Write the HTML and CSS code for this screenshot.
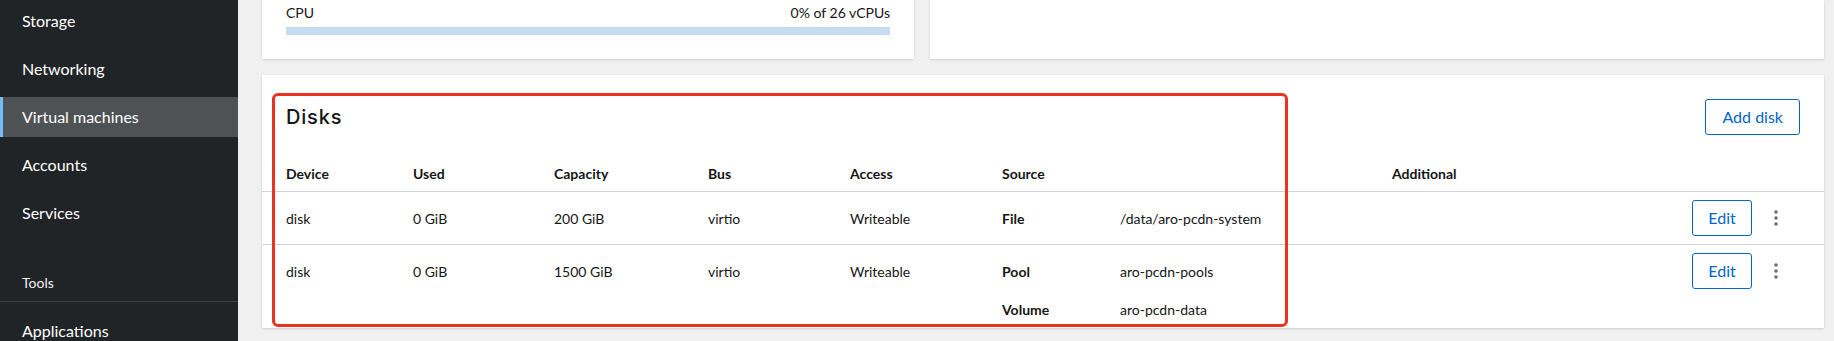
FILE: index.html
```html
<!DOCTYPE html>
<html lang="en">
<head>
<meta charset="utf-8">
<title>Virtual machines</title>
<link rel="stylesheet" href="styles.css">
</head>
<body>
<div class="app">
  <nav class="sidebar">
    <ul class="nav-list">
      <li class="nav-item">Storage</li>
      <li class="nav-item">Networking</li>
      <li class="nav-item active">Virtual machines</li>
      <li class="nav-item">Accounts</li>
      <li class="nav-item">Services</li>
    </ul>
    <div class="nav-section">Tools</div>
    <ul class="nav-list tools">
      <li class="nav-item">Applications</li>
    </ul>
  </nav>
  <main class="main">
    <div class="top-grid">
      <section class="card usage-card">
        <div class="usage-row">
          <span>CPU</span>
          <span>0% of 26 vCPUs</span>
        </div>
        <div class="progress"><div class="progress-fill" style="width:0%"></div></div>
      </section>
      <section class="card"></section>
    </div>
    <section class="card disks-card">
      <header class="card-header">
        <h2 class="card-title">Disks</h2>
        <button class="btn btn-secondary">Add disk</button>
      </header>
      <div class="table">
        <div class="row head">
          <div>Device</div>
          <div>Used</div>
          <div>Capacity</div>
          <div>Bus</div>
          <div>Access</div>
          <div>Source</div>
          <div>Additional</div>
          <div></div>
        </div>
        <div class="row">
          <div>disk</div>
          <div>0 GiB</div>
          <div>200 GiB</div>
          <div>virtio</div>
          <div>Writeable</div>
          <dl class="source">
            <dt>File</dt><dd>/data/aro-pcdn-system</dd>
          </dl>
          <div></div>
          <div class="actions">
            <button class="btn btn-secondary btn-edit">Edit</button>
            <button class="kebab" aria-label="Actions">
              <svg width="4" height="16" viewBox="0 0 4 16"><circle cx="2" cy="2" r="1.8"/><circle cx="2" cy="8" r="1.8"/><circle cx="2" cy="14" r="1.8"/></svg>
            </button>
          </div>
        </div>
        <div class="row last">
          <div>disk</div>
          <div>0 GiB</div>
          <div>1500 GiB</div>
          <div>virtio</div>
          <div>Writeable</div>
          <dl class="source">
            <dt>Pool</dt><dd>aro-pcdn-pools</dd>
            <dt>Volume</dt><dd>aro-pcdn-data</dd>
          </dl>
          <div></div>
          <div class="actions">
            <button class="btn btn-secondary btn-edit">Edit</button>
            <button class="kebab" aria-label="Actions">
              <svg width="4" height="16" viewBox="0 0 4 16"><circle cx="2" cy="2" r="1.8"/><circle cx="2" cy="8" r="1.8"/><circle cx="2" cy="14" r="1.8"/></svg>
            </button>
          </div>
        </div>
      </div>
      <div class="highlight"></div>
    </section>
  </main>
</div>
</body>
</html>
```

FILE: styles.css
```css
* { box-sizing: border-box; }
html, body {
  margin: 0;
  padding: 0;
  height: 100%;
  overflow: hidden;
}
body {
  font-family: "Lato", "Liberation Sans", sans-serif;
  color: #151515;
  background: #f0f0f0;
}
.app {
  display: flex;
  height: 341px;
}
.sidebar {
  width: 238px;
  flex: none;
  background: #212427;
  color: #f0f0f0;
  padding-top: 1px;
}
.nav-list {
  list-style: none;
  margin: 0;
  padding: 0;
  display: flex;
  flex-direction: column;
  gap: 8px;
}
.nav-item {
  height: 40px;
  line-height: 40px;
  padding-left: 22px;
  font-size: 16px;
  color: #fff;
}
.nav-item.active {
  background: #4f5255;
  box-shadow: inset 3px 0 0 #73bcf7;
}
.nav-section {
  margin-top: 39px;
  padding: 0 0 8px 22px;
  font-size: 14px;
  line-height: 21px;
  color: #f0f0f0;
  border-bottom: 1px solid #3c3f42;
}
.nav-list.tools {
  margin-top: 9px;
}
.main {
  flex: 1;
  padding: 0 10px 0 24px;
  display: flex;
  flex-direction: column;
  gap: 16px;
}
.card {
  background: #fff;
  box-shadow: 0 1px 2px rgba(3, 3, 3, 0.12), 0 0 2px rgba(3, 3, 3, 0.06);
}
.top-grid {
  display: grid;
  grid-template-columns: 652px 1fr;
  gap: 16px;
  height: 59px;
  flex: none;
}
.usage-card {
  padding: 2px 24px 24px;
}
.usage-row {
  display: flex;
  justify-content: space-between;
  font-size: 14px;
  line-height: 21px;
}
.progress {
  margin-top: 4px;
  height: 8px;
  background: #c5dbf1;
}
.progress-fill {
  height: 100%;
  background: #06c;
}
.disks-card {
  position: relative;
  flex: none;
}
.card-header {
  display: flex;
  align-items: center;
  justify-content: space-between;
  padding: 24px 24px 0;
}
.card-title {
  margin: 0;
  font-family: "Inter", "Lato", sans-serif;
  font-size: 20px;
  font-weight: 500;
  letter-spacing: 0.8px;
  line-height: 36px;
}
.btn {
  font-family: inherit;
  font-size: 16px;
  line-height: 24px;
  padding: 5px 16px;
  border-radius: 3px;
  background: #fff;
  cursor: pointer;
}
.btn-secondary {
  color: #06c;
  border: 1px solid #06c;
}
.table {
  font-size: 14px;
  line-height: 21px;
}
.row {
  display: grid;
  grid-template-columns: 127px 141px 154px 142px 152px 390px 1fr 108px;
  align-items: start;
  padding: 16px 24px 15px;
  border-bottom: 1px solid #d2d2d2;
}
.row.head {
  font-weight: 700;
  padding: 28px 24px 7px;
}
.row.last {
  border-bottom: 0;
  padding-bottom: 8px;
}
.source {
  margin: 0;
  display: grid;
  grid-template-columns: 118px 1fr;
  row-gap: 17px;
}
.source dt {
  font-weight: 700;
}
.source dd {
  margin: 0;
}
.actions {
  display: flex;
  align-items: center;
  margin: -8px 0 -7px;
  height: 36px;
}
.btn-edit {
  width: 60px;
  height: 36px;
  padding: 5px 0;
  text-align: center;
}
.kebab {
  width: 48px;
  height: 36px;
  padding: 0;
  border: 0;
  background: transparent;
  display: flex;
  align-items: center;
  justify-content: center;
  fill: #6a6e73;
}
.highlight {
  position: absolute;
  left: 10px;
  top: 18px;
  width: 1016px;
  height: 234px;
  border: 3px solid #e8331f;
  border-radius: 6px;
  pointer-events: none;
}
```
